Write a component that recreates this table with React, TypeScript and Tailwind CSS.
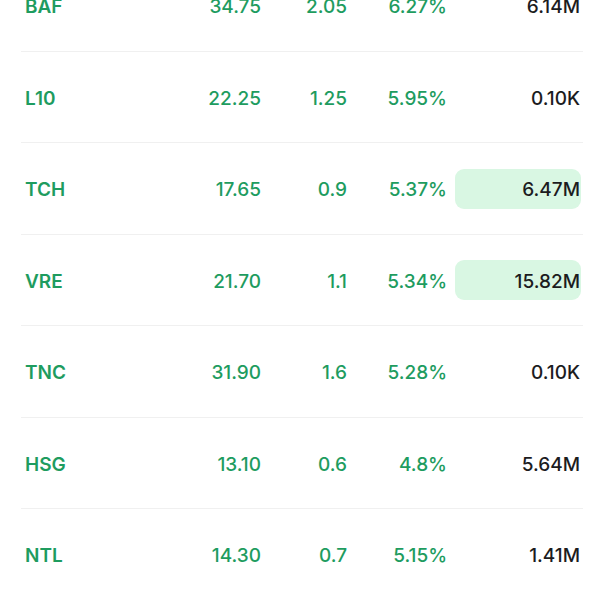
const rows = [
  { sym: "BAF", price: "34.75", chg: "2.05", pct: "6.27%", vol: "6.14M", hot: false },
  { sym: "L10", price: "22.25", chg: "1.25", pct: "5.95%", vol: "0.10K", hot: false },
  { sym: "TCH", price: "17.65", chg: "0.9", pct: "5.37%", vol: "6.47M", hot: true },
  { sym: "VRE", price: "21.70", chg: "1.1", pct: "5.34%", vol: "15.82M", hot: true },
  { sym: "TNC", price: "31.90", chg: "1.6", pct: "5.28%", vol: "0.10K", hot: false },
  { sym: "HSG", price: "13.10", chg: "0.6", pct: "4.8%", vol: "5.64M", hot: false },
  { sym: "NTL", price: "14.30", chg: "0.7", pct: "5.15%", vol: "1.41M", hot: false },
];

export default function App() {
  return (
    <div
      className="w-[600px] h-[600px] overflow-hidden bg-white"
      style={{ fontFamily: "Inter, 'Noto Sans', sans-serif" }}
    >
      <div className="mt-[-40px] pl-[21px] pr-[17px]">
        {rows.map((r) => (
          <div
            key={r.sym}
            className="h-[91.5px] border-b border-[#f0f0f0] flex items-center pl-[4px] pr-[2px] pt-[1px] text-[19px] text-[#1e9c5f]"
          >
            <div className="flex-1 pt-[3px] font-semibold">{r.sym}</div>
            <div className="w-[120px] pt-[3px] text-right font-medium">{r.price}</div>
            <div className="w-[86px] pt-[3px] text-right font-medium">{r.chg}</div>
            <div className="w-[100px] pt-[3px] text-right font-medium">{r.pct}</div>
            <div
              className={`ml-[8px] w-[126px] h-[40px] rounded-[9px] flex items-center justify-end pr-[1px] pt-[3px] font-medium text-[#1c1c1e] ${
                r.hot ? "bg-[#d9f7e3]" : ""
              }`}
            >
              {r.vol}
            </div>
          </div>
        ))}
      </div>
    </div>
  );
}
